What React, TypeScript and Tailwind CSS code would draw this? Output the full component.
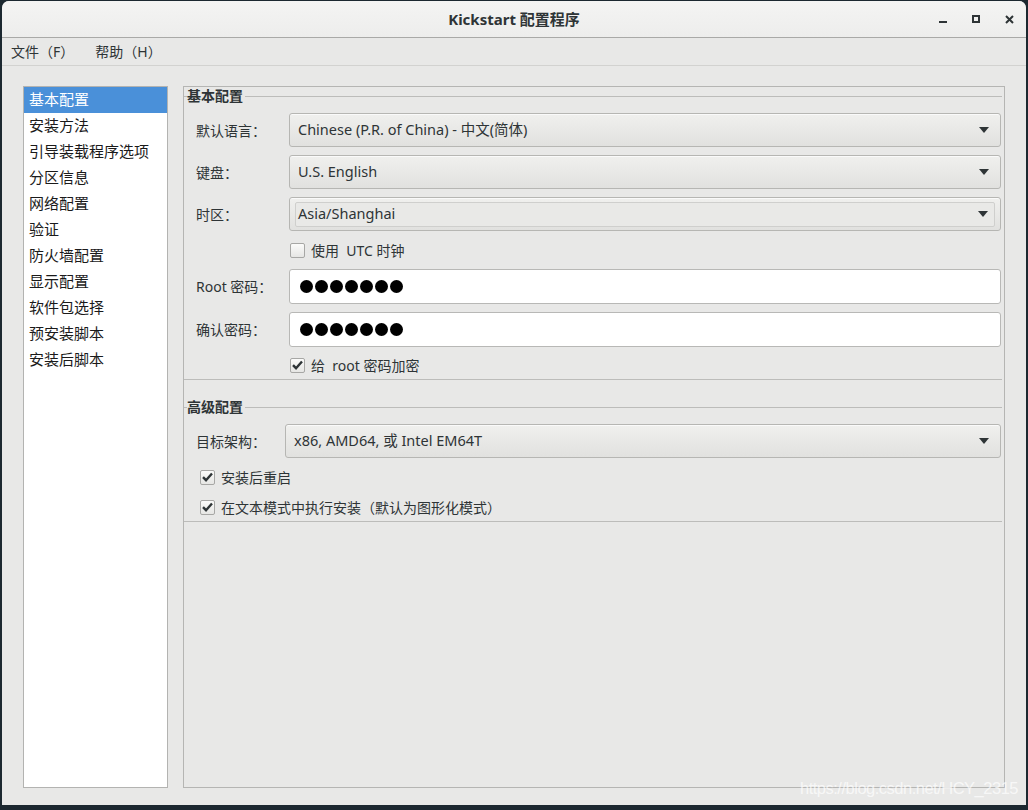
import type { ReactNode } from "react"

const font = { fontFamily: '"Noto Sans", "Noto Sans CJK SC", sans-serif' }

const sections = [
  "基本配置",
  "安装方法",
  "引导装载程序选项",
  "分区信息",
  "网络配置",
  "验证",
  "防火墙配置",
  "显示配置",
  "软件包选择",
  "预安装脚本",
  "安装后脚本",
]

/** Small down-pointing triangle used by combo boxes. */
function Arrow() {
  return (
    <svg width="10" height="6" viewBox="0 0 10 6" className="shrink-0">
      <path d="M0 0 H10 L5 6 Z" fill="#2e3436" />
    </svg>
  )
}

function Combo({ children, entry = false }: { children: ReactNode; entry?: boolean }) {
  return (
    <div className="flex h-[34px] flex-1 items-center rounded-[3px] border border-[#b6b6b3] bg-gradient-to-b from-[#f0f0ee] to-[#e1e1df] text-[14.5px] text-[#2e3436] shadow-[inset_0_1px_0_#fafafa]">
      {entry ? (
        <div className="mx-[5px] flex h-[25px] flex-1 items-center rounded-[2px] border border-[#cfcfcd] bg-[#e9e9e7] pl-[2px] pr-[6px]">
          <div className="flex-1">{children}</div>
          <Arrow />
        </div>
      ) : (
        <div className="flex flex-1 items-center pl-[8px] pr-[11px]">
          <div className="flex-1">{children}</div>
          <Arrow />
        </div>
      )}
    </div>
  )
}

function Check({ checked, label }: { checked: boolean; label: string }) {
  return (
    <div className="flex items-center gap-[6px] text-[14px] text-[#2e3436]">
      <span className="flex h-[15px] w-[15px] items-center justify-center rounded-[2px] border border-[#a7a7a5] bg-gradient-to-b from-[#fbfbfa] to-[#e6e6e4]">
        {checked && (
          <svg width="11" height="10" viewBox="0 0 11 10">
            <path d="M1 5.2 L4 8.2 L10 1.5" fill="none" stroke="#2e3436" strokeWidth="2.4" />
          </svg>
        )}
      </span>
      <span className="whitespace-pre">{label}</span>
    </div>
  )
}

function Password() {
  return (
    <div className="flex h-[35px] flex-1 items-center gap-[2px] rounded-[3px] border border-[#b8b8b6] bg-white pl-[10px]">
      {Array.from({ length: 7 }).map((_, i) => (
        <span key={i} className="h-[13px] w-[13px] rounded-full bg-black" />
      ))}
    </div>
  )
}

function Row({ label, children, width = "w-[105px]" }: { label: string; children: ReactNode; width?: string }) {
  return (
    <div className="flex items-center">
      <div className={`${width} shrink-0 pl-[12px] text-[14px] text-[#2e3436]`}>{label}</div>
      {children}
    </div>
  )
}

function Frame({ title, children, className }: { title: string; children: ReactNode; className?: string }) {
  return (
    <fieldset className={`border-y border-x-0 border-[#bcbcba] ${className ?? ""}`}>
      <legend className="ml-[3px] pr-[2px] text-[14px] font-bold leading-[18px] text-[#2e3436]">{title}</legend>
      {children}
    </fieldset>
  )
}

export default function App() {
  return (
    <div style={font} className="relative h-[810px] w-[1028px] overflow-hidden bg-[#1c2830] px-[2px] pb-[5px] pt-[1px]">
      <div className="flex h-full flex-col overflow-hidden rounded-t-[7px] bg-[#e8e8e7]">
        {/* title bar */}
        <div className="relative flex h-[37px] shrink-0 items-center justify-center border-b border-[#a9a9a7] bg-gradient-to-b from-[#f4f4f3] to-[#ededec]">
          <span className="text-[15px] font-bold text-[#2e3436]">Kickstart 配置程序</span>
          <div className="absolute right-[12px] top-0 flex h-full items-center gap-[25px]">
            <span className="mt-[6px] h-[2px] w-[8px] bg-[#2e3436]" />
            <span className="h-[8px] w-[8px] border-2 border-[#2e3436]" />
            <svg width="9" height="9" viewBox="0 0 9 9">
              <path d="M1 1 L8 8 M8 1 L1 8" stroke="#2e3436" strokeWidth="2" />
            </svg>
          </div>
        </div>

        {/* menu bar */}
        <div className="flex h-[28px] shrink-0 items-center gap-[21px] border-b border-[#d2d2d0] pl-[9px] text-[14px] text-[#2e3436]">
          <span>文件（F）</span>
          <span>帮助（H）</span>
        </div>

        {/* content */}
        <div className="flex flex-1 gap-[15px] pb-[17px] pl-[21px] pr-[21px] pt-[20px]">
          <div className="w-[145px] shrink-0 border border-[#b3b3b1] bg-white">
            {sections.map((s, i) => (
              <div
                key={s}
                className={`flex h-[26px] items-center pl-[5px] text-[15px] leading-[20px] ${
                  i === 0 ? "bg-[#4a90d9] text-white" : "text-[#1a1a1a]"
                }`}
              >
                <span className="-mt-[2px]">{s}</span>
              </div>
            ))}
          </div>

          <div className="flex-1 border border-[#b5b5b3] pb-[2px] pr-[2px]">
            <Frame title="基本配置" className="pb-[3px]">
              <div className="flex flex-col gap-[8px] pr-[1px] pt-[8px]">
                <Row label="默认语言：">
                  <Combo>Chinese (P.R. of China) - 中文(简体)</Combo>
                </Row>
                <Row label="键盘：">
                  <Combo>U.S. English</Combo>
                </Row>
                <Row label="时区：">
                  <Combo entry>Asia/Shanghai</Combo>
                </Row>
                <div className="flex h-[22px] items-center pl-[106px]">
                  <Check checked={false} label="使用  UTC 时钟" />
                </div>
                <Row label="Root 密码：">
                  <Password />
                </Row>
                <Row label="确认密码：">
                  <Password />
                </Row>
                <div className="-mt-[1px] flex h-[22px] items-center pl-[106px]">
                  <Check checked label="给  root 密码加密" />
                </div>
              </div>
            </Frame>

            <Frame title="高级配置" className="mt-[18px] pb-[3px]">
              <div className="flex flex-col pr-[1px] pt-[8px]">
                <Row label="目标架构：" width="w-[101px]">
                  <Combo>x86, AMD64, 或  Intel EM64T</Combo>
                </Row>
                <div className="mt-[8px] flex h-[22px] items-center pl-[16px]">
                  <Check checked label="安装后重启" />
                </div>
                <div className="mt-[8px] flex h-[22px] items-center pl-[16px]">
                  <Check checked label="在文本模式中执行安装（默认为图形化模式）" />
                </div>
              </div>
            </Frame>
          </div>
        </div>
      </div>

      <span
        style={{ fontFamily: '"Liberation Sans", sans-serif' }}
        className="absolute bottom-[9px] right-[10px] text-[16.5px] tracking-[-0.5px] text-white/70"
      >
        https://blog.csdn.net/HCY_2315
      </span>
    </div>
  )
}
